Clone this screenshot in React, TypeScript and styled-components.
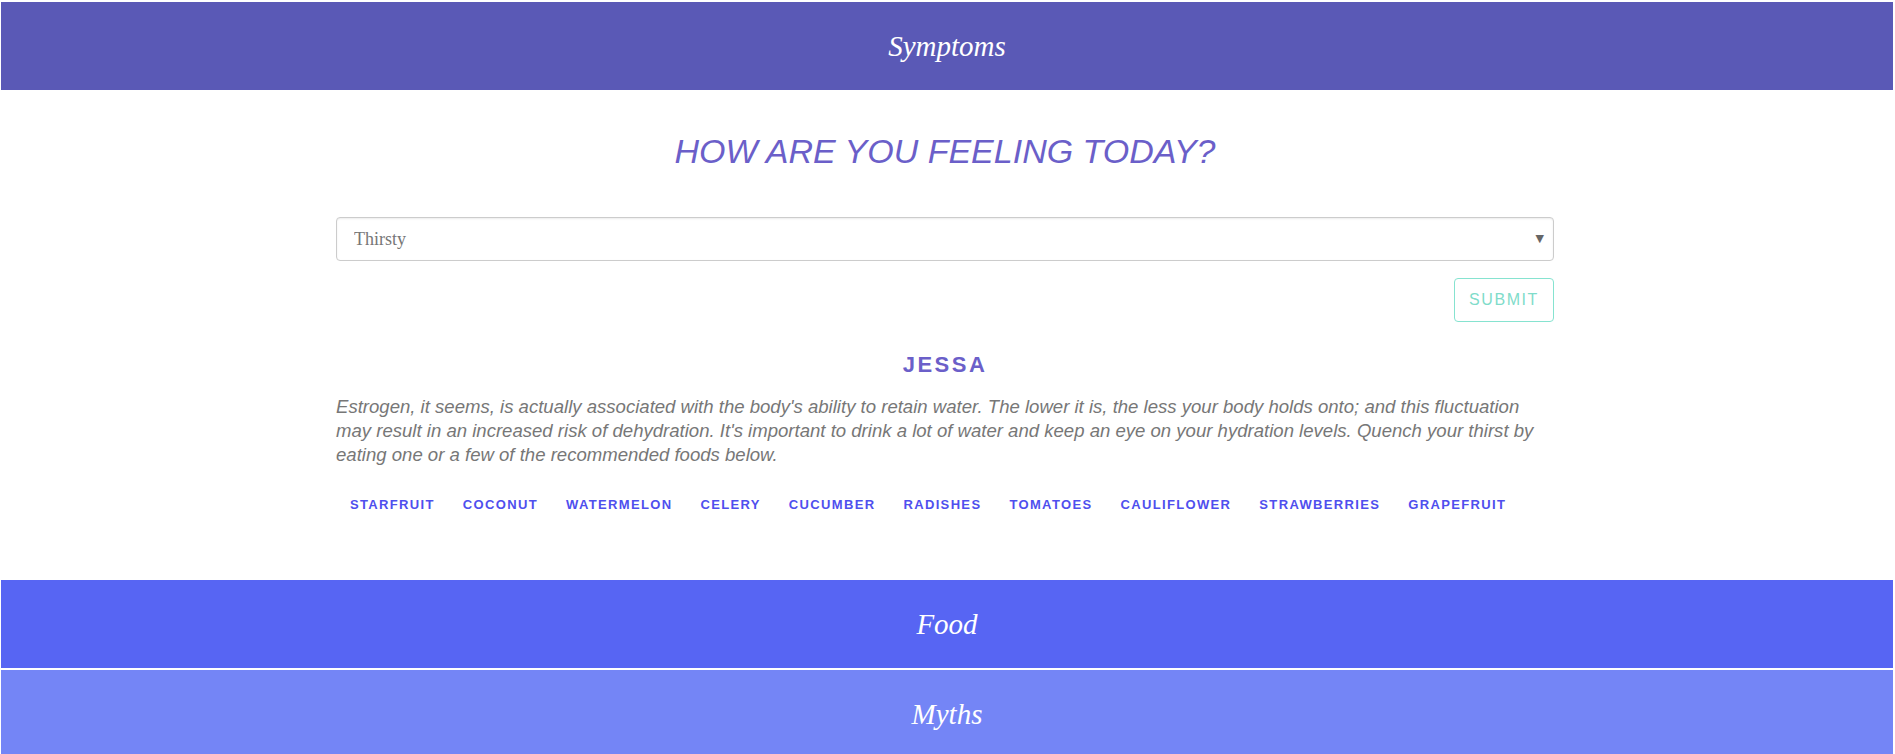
import React from "react";
import styled, { createGlobalStyle } from "styled-components";

const GlobalStyle = createGlobalStyle`
  html, body {
    margin: 0;
    padding: 0;
    background: #ffffff;
    overflow: hidden;
  }
  body {
    font-family: "Liberation Sans", Arial, sans-serif;
  }
`;

const Page = styled.div`
  display: flex;
  flex-direction: column;
  padding-top: 2px;
`;

const Band = styled.div<{ $bg: string }>`
  display: flex;
  align-items: center;
  justify-content: center;
  height: 88px;
  margin: 0 2px 0 1px;
  background: ${(p) => p.$bg};
  color: #ffffff;
  font-family: "Liberation Serif", "Times New Roman", serif;
  font-style: italic;
  font-size: 29px;
`;

const Divider = styled.div`
  height: 2px;
`;

const Content = styled.section`
  width: 1218px;
  margin-left: calc(50% - 611.5px);
  padding-bottom: 65px;
  display: flex;
  flex-direction: column;
`;

const Heading = styled.h1`
  margin: 42px 0 0;
  text-align: center;
  font-family: "Liberation Sans", Arial, sans-serif;
  font-style: italic;
  font-weight: normal;
  font-size: 34px;
  line-height: 39px;
  color: #6b5fc9;
`;

const SelectWrap = styled.div`
  position: relative;
  margin-top: 46px;
`;

const Select = styled.select`
  appearance: none;
  -webkit-appearance: none;
  width: 100%;
  height: 44px;
  box-sizing: border-box;
  border: 1px solid #cccccc;
  border-radius: 4px;
  box-shadow: inset 0 1px 2px rgba(0, 0, 0, 0.08);
  background: #ffffff;
  padding: 0 17px;
  font-family: "Liberation Serif", Georgia, serif;
  font-size: 18px;
  color: #777777;
  outline: none;
`;

const Arrow = styled.span`
  position: absolute;
  right: 10px;
  top: 50%;
  transform: translateY(-52%);
  font-size: 11px;
  color: #666666;
  pointer-events: none;
  font-family: "DejaVu Sans", sans-serif;
`;

const ButtonRow = styled.div`
  display: flex;
  justify-content: flex-end;
  margin-top: 17px;
`;

const SubmitButton = styled.button`
  height: 44px;
  box-sizing: border-box;
  padding: 0 14px;
  border: 1px solid #86e3d0;
  border-radius: 4px;
  background: #ffffff;
  color: #7fdcca;
  font-family: "Liberation Sans", Arial, sans-serif;
  font-size: 16px;
  letter-spacing: 1.6px;
  text-transform: uppercase;
`;

const Name = styled.h2`
  margin: 30px 0 0;
  text-align: center;
  font-family: "Liberation Sans", Arial, sans-serif;
  font-weight: bold;
  font-size: 22px;
  line-height: 26px;
  letter-spacing: 2.5px;
  color: #6b5fc9;
`;

const Description = styled.p`
  margin: 17px 0 0;
  font-family: "Liberation Sans", Arial, sans-serif;
  font-style: italic;
  font-size: 18.57px;
  line-height: 24px;
  color: #777777;
`;

const FoodList = styled.ul`
  list-style: none;
  margin: 28px 0 0;
  padding: 0;
  display: flex;
  flex-wrap: wrap;
`;

const FoodItem = styled.li`
  padding: 0 14px;
  font-family: "Liberation Sans", Arial, sans-serif;
  font-weight: bold;
  font-size: 13px;
  line-height: 20px;
  letter-spacing: 1.35px;
  color: #4f4fee;
`;

const foods = [
  "Starfruit",
  "Coconut",
  "Watermelon",
  "Celery",
  "Cucumber",
  "Radishes",
  "Tomatoes",
  "Cauliflower",
  "Strawberries",
  "Grapefruit",
];

export default function App() {
  return (
    <>
      <GlobalStyle />
      <Page>
        <Band $bg="#5a59b6">Symptoms</Band>
        <Content>
          <Heading>HOW ARE YOU FEELING TODAY?</Heading>
          <SelectWrap>
            <Select defaultValue="Thirsty">
              <option>Thirsty</option>
              <option>Tired</option>
              <option>Bloated</option>
            </Select>
            <Arrow>▼</Arrow>
          </SelectWrap>
          <ButtonRow>
            <SubmitButton>Submit</SubmitButton>
          </ButtonRow>
          <Name>JESSA</Name>
          <Description>
            Estrogen, it seems, is actually associated with the body's ability to
            retain water. The lower it is, the less your body holds onto; and this
            fluctuation may result in an increased risk of dehydration. It's
            important to drink a lot of water and keep an eye on your hydration
            levels. Quench your thirst by eating one or a few of the recommended
            foods below.
          </Description>
          <FoodList>
            {foods.map((f) => (
              <FoodItem key={f}>{f.toUpperCase()}</FoodItem>
            ))}
          </FoodList>
        </Content>
        <Band $bg="#5765f3">Food</Band>
        <Divider />
        <Band $bg="#7485f6">Myths</Band>
      </Page>
    </>
  );
}
